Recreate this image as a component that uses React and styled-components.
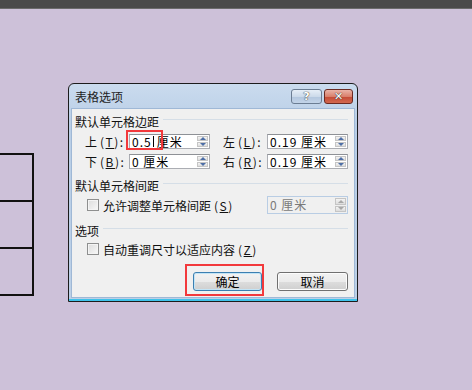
import React from "react";
import styled, { createGlobalStyle } from "styled-components";

const GlobalStyle = createGlobalStyle`
  html, body {
    margin: 0;
    padding: 0;
    background: #cdc1d9;
    font-family: "Noto Sans CJK SC", "Noto Sans", sans-serif;
    font-size: 12px;
    color: #111;
  }
  #root {
    width: 472px;
    height: 390px;
    overflow: hidden;
  }
`;

const TopBar = styled.div`
  height: 8px;
  background: #4a4a4a;
  border-bottom: 1px solid #6b6b6b;
`;

const Desk = styled.div`
  display: flex;
  align-items: flex-start;
`;

const DocTable = styled.div`
  margin-top: 144px;
  width: 32px;
  display: flex;
  flex-direction: column;
  border-top: 2px solid #111;
  border-right: 2px solid #111;
`;

const DocCell = styled.div`
  height: 45px;
  border-bottom: 2px solid #111;
`;

const Dialog = styled.div`
  margin-top: 74px;
  margin-left: 34px;
  width: 290px;
  height: 219px;
  border: 1px solid #1c1c1c;
  border-radius: 6px 6px 0 0;
  background: linear-gradient(#cadbee, #b9cee6 40px, #bcd0e7);
  box-shadow: inset 0 -2px 0 #3fc3ea;
  display: flex;
  flex-direction: column;
  padding: 0 2px 3px 2px;
  box-sizing: border-box;
`;

const TitleBar = styled.div`
  height: 24px;
  display: flex;
  align-items: flex-start;
  justify-content: space-between;
`;

const Title = styled.div`
  margin-top: 5px;
  margin-left: 4px;
  font-size: 12px;
  line-height: 16px;
  color: #1e1e1e;
`;

const Controls = styled.div`
  display: flex;
  gap: 2px;
  margin-top: 5px;
  margin-right: 2px;
`;

const CapButton = styled.div`
  width: ${(p) => p.$w}px;
  height: 15px;
  box-sizing: border-box;
  border: 1px solid ${(p) => (p.$close ? "#6b2a22" : "#6b7d93")};
  border-radius: 3px;
  background: ${(p) =>
    p.$close
      ? "linear-gradient(#eab3a7, #d9806c 50%, #c44a35 51%, #d2684f)"
      : "linear-gradient(#e6eef7, #ccdaea 50%, #b2c6de 51%, #c3d4e8)"};
  display: flex;
  align-items: center;
  justify-content: center;
  color: #fff;
  font-family: "DejaVu Sans", sans-serif;
  font-weight: bold;
  font-size: 11px;
  line-height: 1;
  text-shadow: 0 0 1px #333, 0 0 1px #333;
`;

const Content = styled.div`
  flex: 1;
  background: #f0f0f0;
  border: 1px solid #9fb8d6;
  padding: 0 6px 0 3px;
  display: flex;
  flex-direction: column;
`;

const Heading = styled.div`
  display: flex;
  align-items: center;
  gap: 4px;
  height: 16px;
  margin-top: ${(p) => p.$mt}px;
  font-size: 12px;
  white-space: nowrap;
  &::after {
    content: "";
    flex: 1;
    height: 1px;
    background: #d5dee7;
    margin-top: -4px;
  }
`;

const FieldGrid = styled.div`
  display: grid;
  grid-template-columns: 44px 81px 57px 81px;
  grid-auto-rows: 15px;
  row-gap: 5px;
  margin-top: 5px;
  margin-left: 10px;
`;

const Label = styled.div`
  display: flex;
  align-items: center;
  font-size: 12px;
  white-space: nowrap;
  padding-left: ${(p) => (p.$second ? 13 : 0)}px;
`;

const Key = styled.span`
  margin-left: 3px;
  letter-spacing: 1.5px;
`;

const U = styled.span`
  text-decoration: underline;
`;

const SpinBox = styled.div`
  position: relative;
  display: flex;
  height: ${(p) => (p.$h ? p.$h : 15)}px;
  width: 81px;
  box-sizing: border-box;
  border: 1px solid ${(p) => (p.$disabled ? "#b9cde4" : "#abadb3")};
  border-top-color: ${(p) => (p.$disabled ? "#b9cde4" : "#8e9196")};
  background: ${(p) => (p.$disabled ? "#f0f0f0" : "#fff")};
`;

const SpinText = styled.div`
  flex: 1;
  padding-left: 2px;
  display: flex;
  align-items: center;
  font-size: 12px;
  line-height: 1;
  letter-spacing: 1px;
  white-space: pre;
  color: ${(p) => (p.$disabled ? "#7a7a7a" : "#000")};
`;

const Caret = styled.span`
  display: inline-block;
  width: 1px;
  height: 11px;
  background: #000;
  margin: 0 3px 0 1px;
`;

const Arrows = styled.div`
  width: 11px;
  margin: 1px 1px 1px 0;
  display: flex;
  flex-direction: column;
  gap: 1px;
`;

const Arrow = styled.div`
  flex: 1;
  background: linear-gradient(#f4f4f4, #dcdcdc);
  border: 1px solid #c5c5c5;
  box-sizing: border-box;
  display: flex;
  align-items: center;
  justify-content: center;
  &::before {
    content: "";
    border-left: 3px solid transparent;
    border-right: 3px solid transparent;
    ${(p) => (p.$down ? "border-top" : "border-bottom")}: 3px solid
      ${(p) => (p.$disabled ? "#a8a8a8" : "#4d6ea6")};
  }
`;

const Highlight = styled.div`
  position: absolute;
  left: ${(p) => p.$l}px;
  top: ${(p) => p.$t}px;
  width: ${(p) => p.$w}px;
  height: ${(p) => p.$h}px;
  border: 2px solid #f2393c;
  box-sizing: border-box;
  pointer-events: none;
`;

const CheckRow = styled.div`
  display: flex;
  align-items: center;
  height: ${(p) => p.$h}px;
  margin-top: ${(p) => p.$mt}px;
  margin-left: 12px;
  font-size: 12px;
  white-space: nowrap;
`;

const Check = styled.div`
  width: 12px;
  height: 12px;
  box-sizing: border-box;
  border: 1px solid #8e8f8f;
  background: linear-gradient(135deg, #dcdcdc, #f8f8f8);
  box-shadow: inset 0 0 0 1px #f4f4f4;
  margin-right: 4px;
`;

const Spacer = styled.div`
  flex: 1;
`;

const ButtonRow = styled.div`
  display: flex;
  justify-content: flex-end;
  gap: 15px;
  margin-top: 16px;
`;

const DlgButton = styled.div`
  position: relative;
  width: ${(p) => p.$w}px;
  height: 19px;
  box-sizing: border-box;
  border: 1px solid ${(p) => (p.$focus ? "#3c7fb1" : "#707070")};
  border-radius: 3px;
  background: linear-gradient(#f2f2f2, #ebebeb 50%, #dddddd 51%, #cfcfcf);
  box-shadow: ${(p) => (p.$focus ? "inset 0 0 0 1px #c2e4f6" : "inset 0 0 0 1px #fcfcfc")};
  display: flex;
  align-items: center;
  justify-content: center;
  font-size: 12px;
  color: #000;
`;

function Spin({ value, disabled, caret, children, h }) {
  return (
    <SpinBox $disabled={disabled} $h={h}>
      <SpinText $disabled={disabled}>
        {caret ? (
          <>
            0.5
            <Caret />
            厘米
          </>
        ) : (
          value
        )}
      </SpinText>
      <Arrows>
        <Arrow $disabled={disabled} />
        <Arrow $down $disabled={disabled} />
      </Arrows>
      {children}
    </SpinBox>
  );
}

function Mnemonic({ k, colon }) {
  return (
    <Key>
      (<U>{k}</U>){colon ? ":" : ""}
    </Key>
  );
}

export default function App() {
  return (
    <>
      <GlobalStyle />
      <TopBar />
      <Desk>
        <DocTable>
          <DocCell />
          <DocCell />
          <DocCell />
        </DocTable>
        <Dialog>
          <TitleBar>
            <Title>表格选项</Title>
            <Controls>
              <CapButton $w={31}>?</CapButton>
              <CapButton $w={29} $close>
                ✕
              </CapButton>
            </Controls>
          </TitleBar>
          <Content>
            <Heading $mt={4}>默认单元格边距</Heading>
            <FieldGrid>
              <Label>
                上<Mnemonic k="T" colon />
              </Label>
              <Spin caret>
                <Highlight $l={-4} $t={-5} $w={37} $h={20} />
              </Spin>
              <Label $second>
                左<Mnemonic k="L" colon />
              </Label>
              <Spin value="0.19 厘米" />
              <Label>
                下<Mnemonic k="B" colon />
              </Label>
              <Spin value="0 厘米" />
              <Label $second>
                右<Mnemonic k="R" colon />
              </Label>
              <Spin value="0.19 厘米" />
            </FieldGrid>
            <Heading $mt={8}>默认单元格间距</Heading>
            <CheckRow $h={18} $mt={3}>
              <Check />
              允许调整单元格间距
              <Mnemonic k="S" />
              <Spacer />
              <Spin value="0 厘米" disabled h={18} />
            </CheckRow>
            <Heading $mt={8}>选项</Heading>
            <CheckRow $h={14} $mt={4}>
              <Check />
              自动重调尺寸以适应内容
              <Mnemonic k="Z" />
            </CheckRow>
            <ButtonRow>
              <DlgButton $w={69} $focus>
                确定
                <Highlight $l={-9} $t={-9} $w={79} $h={32} />
              </DlgButton>
              <DlgButton $w={71}>取消</DlgButton>
            </ButtonRow>
          </Content>
        </Dialog>
      </Desk>
    </>
  );
}
